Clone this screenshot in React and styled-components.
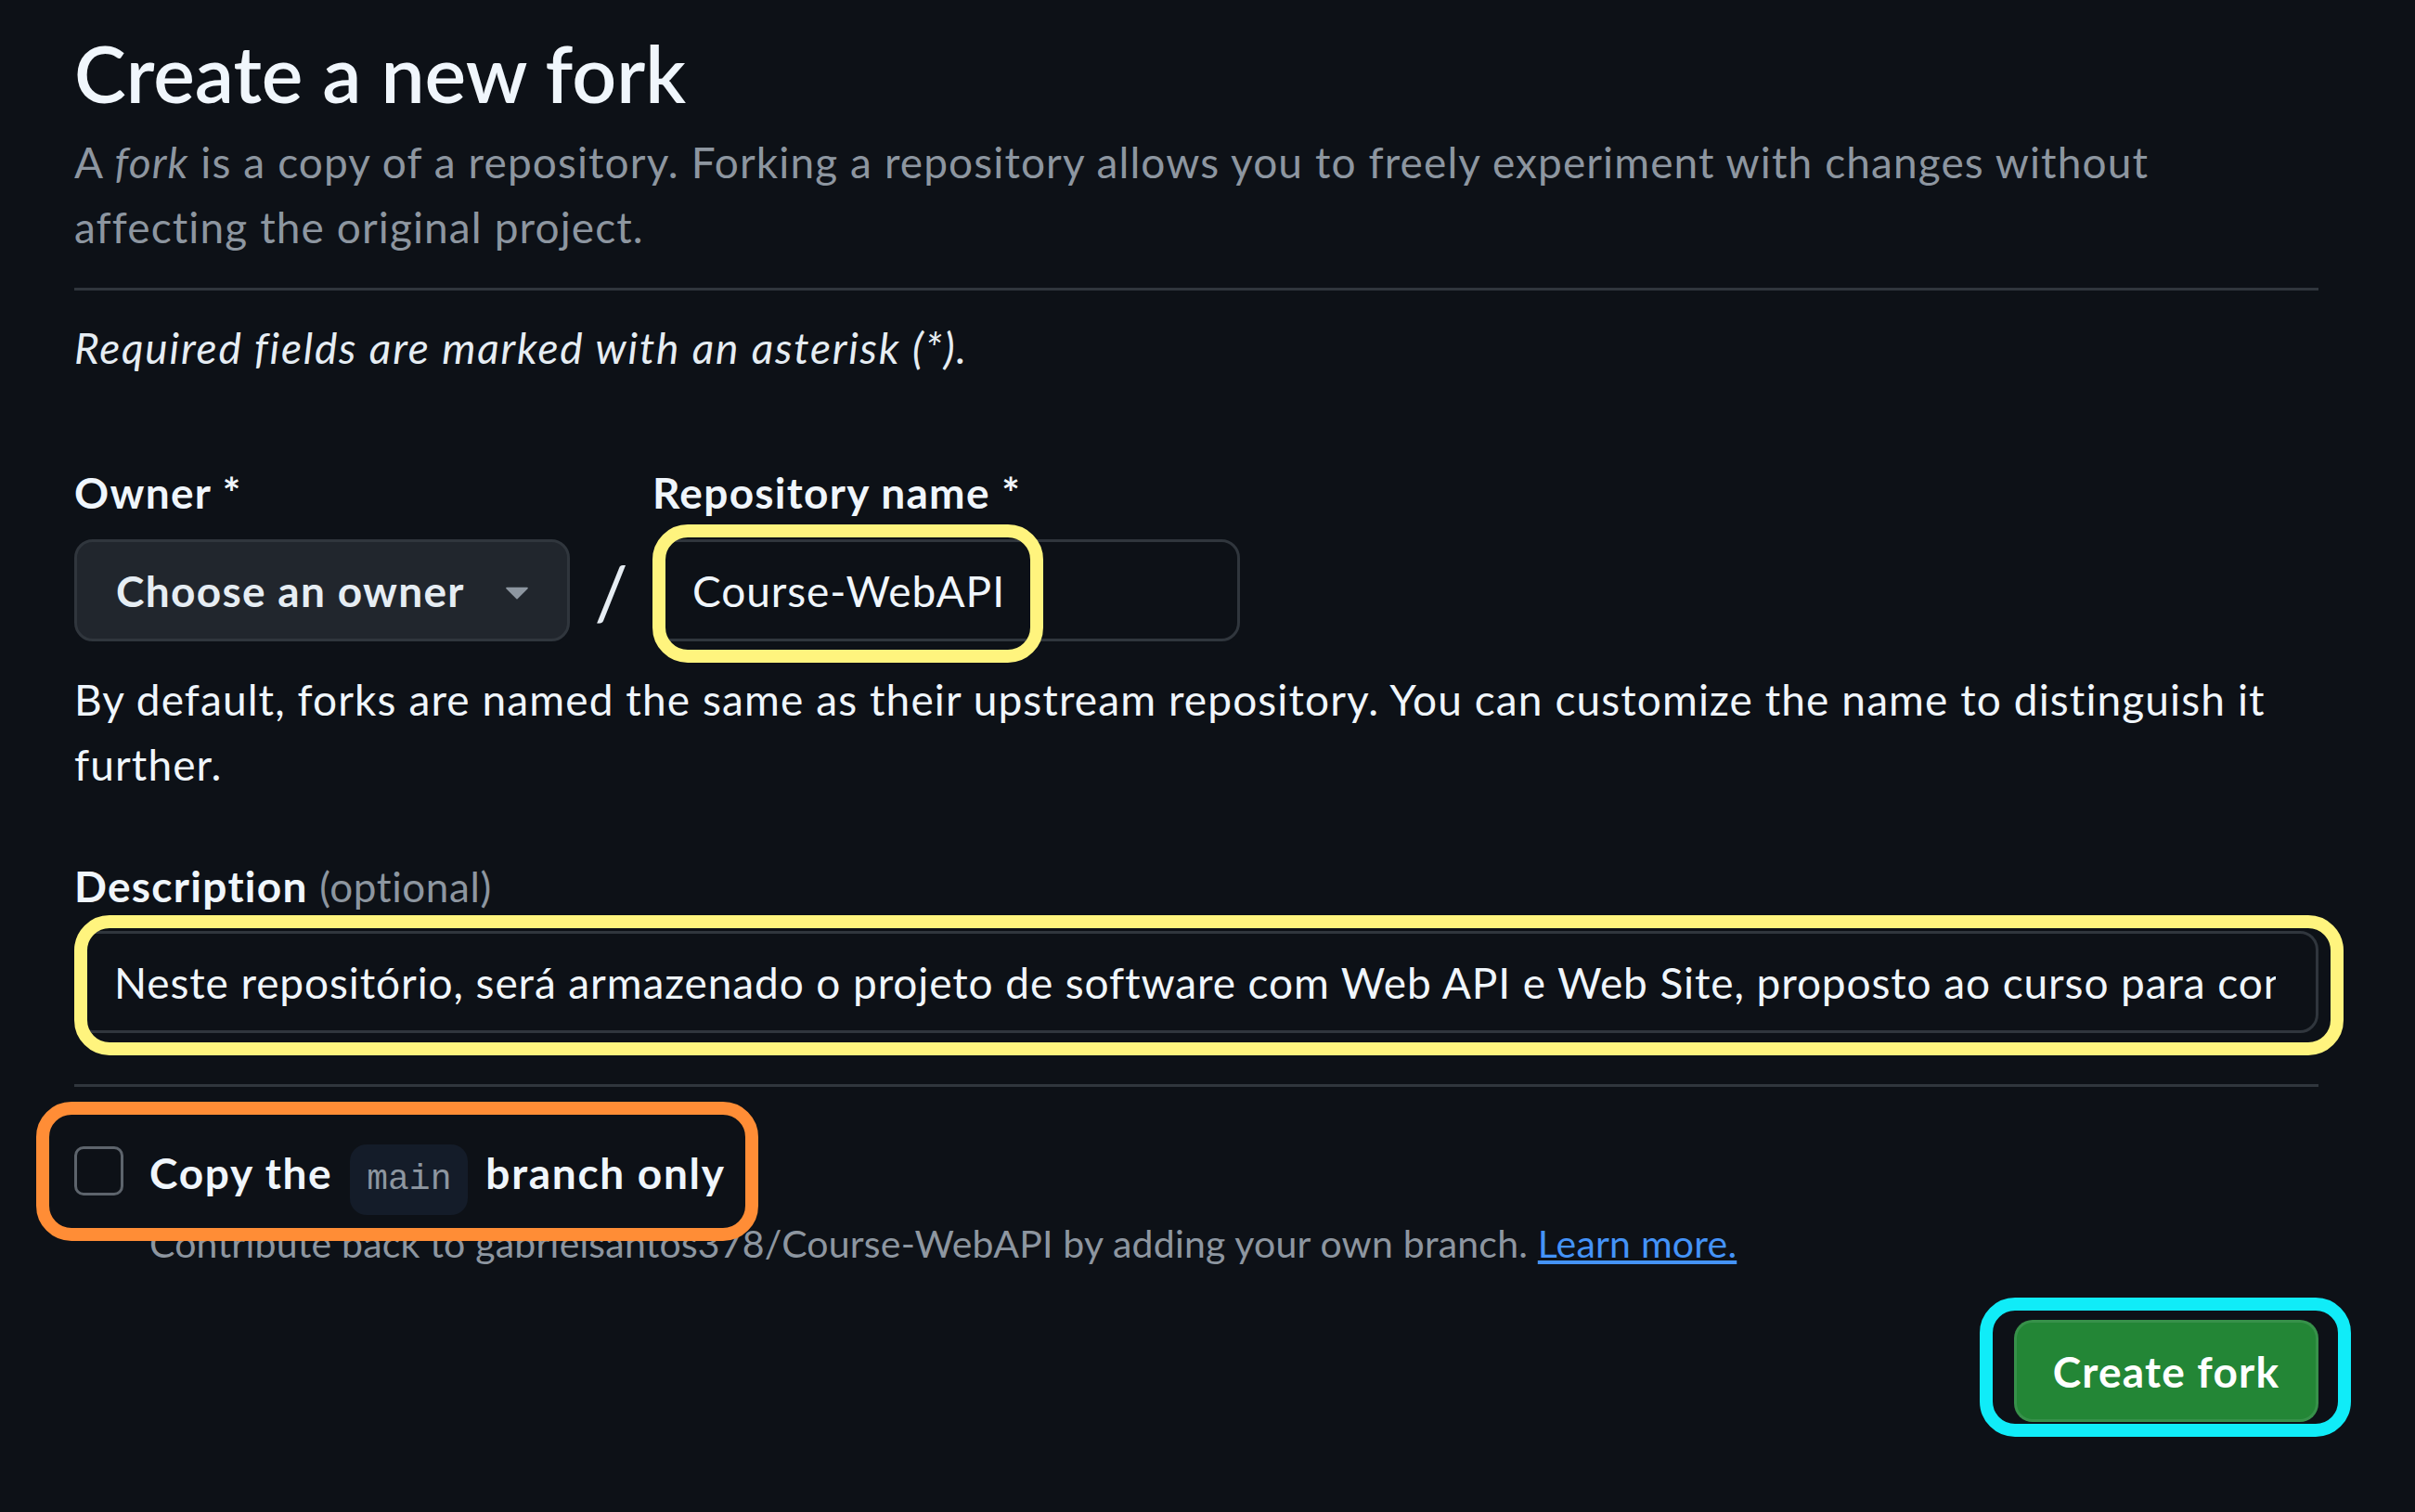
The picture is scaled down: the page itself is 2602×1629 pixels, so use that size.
import React from "react";
import styled, { createGlobalStyle } from "styled-components";

const GlobalStyle = createGlobalStyle`
  html, body {
    margin: 0;
    padding: 0;
    background: #0d1117;
  }
  body {
    font-family: Lato, "Open Sans", sans-serif;
    color: #e6edf3;
  }
`;

const Page = styled.main`
  width: 2602px;
  min-height: 1629px;
  box-sizing: border-box;
  padding: 26px 0 0 80px;
`;

const Form = styled.div`
  width: 2418px;
`;

const Subhead = styled.div`
  padding-bottom: 30px;
  border-bottom: 3px solid #30363d;
`;

const Title = styled.h1`
  margin: 0;
  font-size: 84px;
  line-height: 105px;
  font-weight: 600;
  color: #f0f6fc;
`;

const Lead = styled.p`
  margin: 9px 0 0;
  font-size: 46px;
  line-height: 70px;
  letter-spacing: 1.1px;
  color: #8d96a0;
`;

const Required = styled.p`
  margin: 27px 0 0;
  font-size: 46px;
  line-height: 70px;
  letter-spacing: 1.8px;
  font-style: italic;
  color: #e6edf3;
`;

const Row = styled.div`
  display: flex;
  align-items: flex-end;
  margin-top: 86px;
`;

const Field = styled.div`
  display: flex;
  flex-direction: column;
  gap: 15px;
`;

const Label = styled.label`
  font-size: 46px;
  line-height: 70px;
  font-weight: 700;
  letter-spacing: 1.3px;
  color: #f0f6fc;
`;

const Muted = styled.span`
  font-size: 44px;
  font-weight: 400;
  letter-spacing: 0.6px;
  color: #8d96a0;
`;

const OwnerButton = styled.button`
  display: flex;
  align-items: center;
  justify-content: space-between;
  width: 534px;
  height: 110px;
  box-sizing: border-box;
  padding: 0 28px 0 42px;
  background: #21262d;
  border: 3px solid #30363d;
  border-radius: 20px;
  font-family: inherit;
  font-size: 46px;
  font-weight: 700;
  letter-spacing: 1.3px;
  color: #e6edf3;
`;

const Slash = styled.span`
  width: 89px;
  height: 110px;
  display: flex;
  align-items: center;
  justify-content: center;
  font-size: 80px;
  color: #e6edf3;
`;

const Anchor = styled.div`
  position: relative;
  display: ${(p) => (p.$block ? "block" : "inline-block")};
`;

const TextInput = styled.input`
  display: block;
  width: ${(p) => p.$width}px;
  height: 110px;
  box-sizing: border-box;
  padding: 0 43px 0 40px;
  background: #0d1117;
  border: 3px solid #30363d;
  border-radius: 20px;
  font-family: inherit;
  font-size: 46px;
  letter-spacing: 0.9px;
  color: #f0f6fc;
  outline: none;
`;

const Mark = styled.span`
  position: absolute;
  top: ${(p) => p.$top}px;
  left: ${(p) => p.$left}px;
  width: ${(p) => p.$w}px;
  height: ${(p) => p.$h}px;
  box-sizing: border-box;
  border: 14px solid ${(p) => p.$color};
  border-radius: 38px;
  pointer-events: none;
`;

const Note = styled.p`
  margin: ${(p) => p.$top}px 0 0;
  font-size: 46px;
  line-height: 70px;
  letter-spacing: 1.1px;
  color: #f0f6fc;
`;

const DescLabel = styled(Label)`
  display: block;
  margin: 61px 0 13px;
`;

const Divider = styled.hr`
  margin: 55px 0 0;
  border: 0;
  border-top: 3px solid #30363d;
`;

const CheckSection = styled.div`
  position: relative;
  margin-top: 58px;
`;

const CheckRow = styled.label`
  display: flex;
  align-items: flex-start;
  gap: 28px;
`;

const Box = styled.span`
  flex: none;
  width: 53px;
  height: 53px;
  margin-top: 6px;
  box-sizing: border-box;
  border: 3px solid #5d646c;
  border-radius: 10px;
`;

const CheckText = styled.span`
  font-size: 46px;
  line-height: 70px;
  font-weight: 700;
  letter-spacing: 1.7px;
  color: #f0f6fc;
`;

const Code = styled.code`
  display: inline-block;
  height: 76px;
  line-height: 76px;
  padding: 0 18px;
  margin: 0 6px;
  border-radius: 18px;
  background: #141c29;
  font-family: "Liberation Mono", "DejaVu Sans Mono", monospace;
  font-size: 38px;
  font-weight: 400;
  letter-spacing: 0;
  color: #8d96a0;
`;

const Hint = styled.p`
  margin: 0 0 0 81px;
  font-size: 41px;
  line-height: 61px;
  letter-spacing: 0.2px;
  color: #8d96a0;
`;

const Link = styled.a`
  color: #4493f8;
  text-decoration: underline;
`;

const Footer = styled.div`
  display: flex;
  justify-content: flex-end;
  margin-top: 52px;
`;

const PrimaryButton = styled.button`
  display: block;
  width: 328px;
  height: 110px;
  box-sizing: border-box;
  background: #238636;
  border: 3px solid rgba(240, 246, 252, 0.1);
  border-radius: 20px;
  font-family: inherit;
  font-size: 46px;
  font-weight: 700;
  letter-spacing: 1.2px;
  color: #ffffff;
`;

const Caret = () => (
  <svg width="52" height="52" viewBox="0 0 16 16" fill="#8d96a0">
    <path d="m4.427 7.427 3.396 3.396a.25.25 0 0 0 .354 0l3.396-3.396A.25.25 0 0 0 11.396 7H4.604a.25.25 0 0 0-.177.427Z" />
  </svg>
);

const App = () => {
  return (
    <Page>
      <GlobalStyle />
      <Form>
        <Subhead>
          <Title>Create a new fork</Title>
          <Lead>
            A <em>fork</em> is a copy of a repository. Forking a repository allows you to freely
            experiment with changes without
            <br />
            affecting the original project.
          </Lead>
        </Subhead>

        <Required>Required fields are marked with an asterisk (*).</Required>

        <Row>
          <Field>
            <Label>Owner *</Label>
            <OwnerButton type="button">
              Choose an owner
              <Caret />
            </OwnerButton>
          </Field>
          <Slash>/</Slash>
          <Field>
            <Label>Repository name *</Label>
            <Anchor>
              <TextInput $width={633} defaultValue="Course-WebAPI" readOnly />
              <Mark $color="#fff47e" $top={-16} $left={0} $w={421} $h={149} />
            </Anchor>
          </Field>
        </Row>

        <Note $top={28}>
          By default, forks are named the same as their upstream repository. You can customize
          the name to distinguish it
          <br />
          further.
        </Note>

        <DescLabel>
          Description <Muted>(optional)</Muted>
        </DescLabel>
        <Anchor $block>
          <TextInput
            $width={2418}
            defaultValue="Neste repositório, será armazenado o projeto de software com Web API e Web Site, proposto ao curso para conclusão do módulo."
            readOnly
          />
          <Mark $color="#fff47e" $top={-17} $left={0} $w={2445} $h={151} />
        </Anchor>

        <Divider />

        <CheckSection>
          <CheckRow>
            <Box />
            <CheckText>
              Copy the <Code>main</Code> branch only
            </CheckText>
          </CheckRow>
          <Hint>
            Contribute back to gabrielsantos378/Course-WebAPI by adding your own branch.{" "}
            <Link href="#">Learn more.</Link>
          </Hint>
          <Mark $color="#ff8d36" $top={-42} $left={-41} $w={778} $h={150} />
        </CheckSection>

        <Footer>
          <Anchor>
            <PrimaryButton type="button">Create fork</PrimaryButton>
            <Mark $color="#10ecf8" $top={-24} $left={-37} $w={400} $h={150} />
          </Anchor>
        </Footer>
      </Form>
    </Page>
  );
};

export default App;
